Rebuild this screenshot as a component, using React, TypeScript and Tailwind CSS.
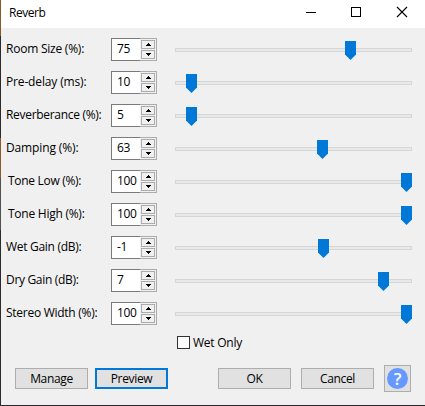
type Row = { label: string; value: string; thumb: number; labelClass: string };

const rows: Row[] = [
  { label: "Room Size (%):", value: "75", thumb: 170, labelClass: "tracking-[-0.23px]" },
  { label: "Pre-delay (ms):", value: "10", thumb: 11, labelClass: "tracking-[-0.15px]" },
  { label: "Reverberance (%):", value: "5", thumb: 11, labelClass: "tracking-[-0.3px]" },
  { label: "Damping (%):", value: "63", thumb: 142, labelClass: "tracking-[-0.13px]" },
  { label: "Tone Low (%):", value: "100", thumb: 226, labelClass: "tracking-[-0.3px] pl-[2px]" },
  { label: "Tone High (%):", value: "100", thumb: 226, labelClass: "tracking-[-0.25px] pl-[2px]" },
  { label: "Wet Gain (dB):", value: "-1", thumb: 143, labelClass: "tracking-[-0.3px]" },
  { label: "Dry Gain (dB):", value: "7", thumb: 203, labelClass: "tracking-[-0.32px]" },
  { label: "Stereo Width (%):", value: "100", thumb: 226, labelClass: "tracking-[-0.27px]" },
];

function SpinButton({ down = false }: { down?: boolean }) {
  return (
    <button className="flex h-[9px] w-[14px] items-center justify-start border border-[#acacac] bg-[#f0f0f0] pl-[4px]">
      <svg width="5" height="3" viewBox="0 0 5 3" shapeRendering="crispEdges" fill="#000">
        {down ? <path d="M0 0h5v1h-1v1h-1v1h-1v-1h-1v-1h-1z" /> : <path d="M0 3h5v-1h-1v-1h-1v-1h-1v1h-1v1h-1z" />}
      </svg>
    </button>
  );
}

function Spinner({ value }: { value: string }) {
  return (
    <div className="flex h-[23px] w-[46px]">
      <div className="w-[29px] border-y border-l border-[#7a7a7a] bg-white pl-[5px] leading-[20px] tracking-[-0.4px]">
        {value}
      </div>
      <div className="flex w-[17px] flex-col gap-px border-y border-r border-[#acacb0] bg-[#f0f0f0] pt-px pl-px">
        <SpinButton />
        <SpinButton down />
      </div>
    </div>
  );
}

function Slider({ thumb }: { thumb: number }) {
  return (
    <div className="relative ml-[18px] h-[23px] w-[237px] pt-[10px]">
      <div className="h-[4px] border border-[#d6d6d6] bg-[#e7eaea]" />
      <svg className="absolute top-[3px]" style={{ left: thumb }} width="11" height="19" viewBox="0 0 11 19">
        <path d="M0 0h11v13.5L5.5 19 0 13.5z" fill="#0078d7" />
      </svg>
    </div>
  );
}

function Button({ label, className }: { label: string; className: string }) {
  return (
    <button className={`flex h-[21px] w-[73px] items-center justify-center bg-[#e1e1e1] leading-[16px] ${className}`}>
      {label}
    </button>
  );
}

export default function App() {
  return (
    <div className="flex h-[406px] w-[425px] overflow-hidden bg-[#f0f0f0] font-['Open_Sans','Noto_Sans',sans-serif] text-[12px] text-black">
      <div className="flex w-px shrink-0 flex-col bg-[#2d2a2e]">
        <div className="h-[36px] bg-[#8a5a2c]" />
        <div className="h-[102px]" />
        <div className="h-[40px] bg-[#8a5a2c]" />
        <div className="h-[52px] bg-[#55504a]" />
      </div>
      <div className="flex w-[424px] flex-col border-b border-[#2b272b]">
        <header className="flex h-[28px] shrink-0 bg-white pl-[8px]">
          <h1 className="w-[297px] leading-[25px] tracking-[-0.45px]">Reverb</h1>
          <svg width="102" height="28" viewBox="306 0 102 28" fill="none" stroke="#000">
            <path d="M306 12.5h10" shapeRendering="crispEdges" />
            <path d="M351.5 7.5h9v9h-9z" shapeRendering="crispEdges" />
            <path d="M397 7l10 10M407 7l-10 10" strokeWidth="1.1" />
          </svg>
        </header>
        <main className="flex flex-col gap-[10px] pt-[10px] pl-[5px]">
          {rows.map((row) => (
            <div key={row.label} className="flex h-[23px]">
              <div className={`w-[105px] leading-[21px] whitespace-nowrap ${row.labelClass}`}>{row.label}</div>
              <Spinner value={row.value} />
              <Slider thumb={row.thumb} />
            </div>
          ))}
        </main>
        <label className="mt-[11px] ml-[176px] flex h-[13px] items-center gap-[3px]">
          <span className="size-[13px] border border-[#333] bg-white" />
          <span className="tracking-[-0.25px]">Wet Only</span>
        </label>
        <footer className="mt-[16px] flex h-[27px] items-center pl-[14px]">
          <Button label="Manage" className="border border-[#adadad] tracking-[-0.35px]" />
          <Button label="Preview" className="ml-[7px] border-2 border-[#0078d7] tracking-[-0.35px]" />
          <Button label="OK" className="ml-[50px] border border-[#adadad] tracking-[-0.3px]" />
          <Button label="Cancel" className="ml-[10px] border border-[#adadad] tracking-[-0.35px]" />
          <button className="ml-[10px] flex size-[27px] items-center justify-center border border-[#adadad] bg-[#e1e1e1]">
            <span className="flex size-[21px] items-center justify-center rounded-full bg-[#6699ff] text-[17px] leading-[21px] font-semibold text-white">
              ?
            </span>
          </button>
        </footer>
      </div>
    </div>
  );
}
